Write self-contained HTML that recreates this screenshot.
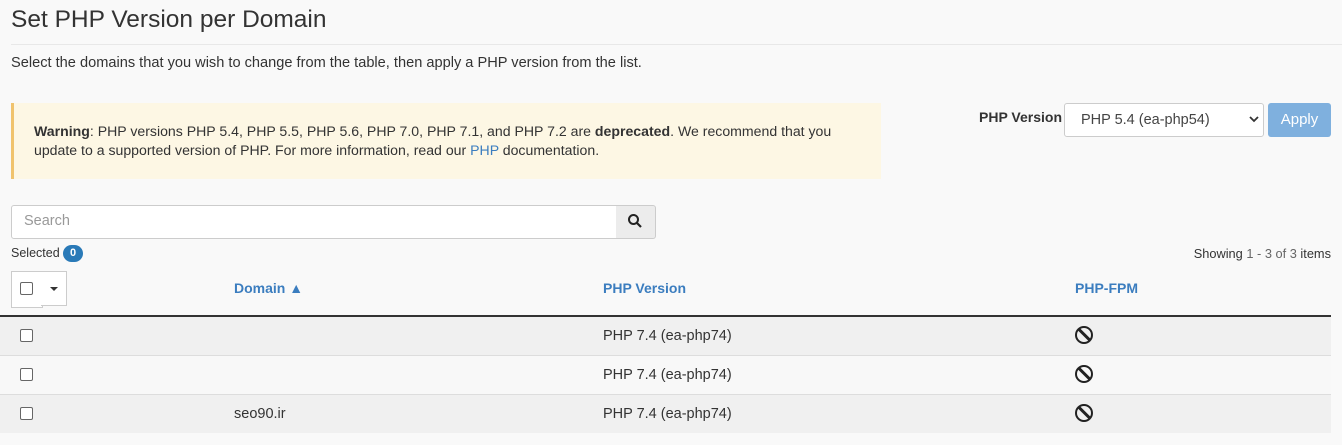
<!DOCTYPE html><html><head><style>
body{margin:0;width:1342px;height:445px;background:#f9f9f9;font-family:"Liberation Sans",sans-serif;color:#333;position:relative;overflow:hidden;font-size:14px}
.a{position:absolute;white-space:nowrap}
a{color:#3b7dbf;text-decoration:none}
.ban{position:absolute;box-sizing:border-box;width:18px;height:18px;border:2.5px solid #222;border-radius:50%}
.ban:after{content:"";position:absolute;left:5.5px;top:-1px;width:2.5px;height:16px;background:#222;transform:rotate(-45deg)}
.cb{position:absolute;width:11px;height:11px;border:1px solid #666;border-radius:2px;background:#fff}
</style></head><body>
<div class="a" style="left:11px;top:6px;font-size:24.5px;color:#333">Set PHP Version per Domain</div>
<div class="a" style="left:11px;top:44px;width:1331px;height:1px;background:#e8e8e8"></div>
<div class="a" style="left:11px;top:55px;font-size:14.6px">Select the domains that you wish to change from the table, then apply a PHP version from the list.</div>
<div class="a" style="left:11px;top:103px;width:867px;height:76px;background:#fdf7e4;border-left:3px solid #f0c36d"></div>
<div class="a" style="left:34px;top:122px;font-size:14.1px;line-height:19px"><b>Warning</b>: PHP versions PHP 5.4, PHP 5.5, PHP 5.6, PHP 7.0, PHP 7.1, and PHP 7.2 are <b>deprecated</b>. We recommend that you<br>update to a supported version of PHP. For more information, read our <a>PHP</a> documentation.</div>
<div class="a" style="left:979px;top:109px;font-size:14px;font-weight:bold;color:#333">PHP Version</div>
<div class="a" style="left:1064px;top:103px;width:198px;height:32px;border:1px solid #ccc;border-radius:3px;background:#fff"></div>
<div class="a" style="left:1081px;top:112px;font-size:14.5px;color:#444">PHP 5.4 (ea-php54)</div>
<svg class="a" style="left:1249px;top:116px" width="10" height="7"><path d="M1 1l4 4 4-4" fill="none" stroke="#333" stroke-width="1.8"/></svg>
<div class="a" style="left:1268px;top:103px;width:63px;height:34px;background:#7fb0de;border-radius:3px;color:#fff;font-size:15px;text-align:center;line-height:34px">Apply</div>
<div class="a" style="left:11px;top:205px;width:604px;height:32px;border:1px solid #ccc;border-radius:3px 0 0 3px;background:#fff"></div>
<div class="a" style="left:24px;top:213px;color:#999;font-size:14.5px">Search</div>
<div class="a" style="left:616px;top:205px;width:39px;height:32px;border:1px solid #ccc;border-left:0;background:#ececec;border-radius:0 3px 3px 0"></div>
<svg class="a" style="left:627px;top:213px" width="16" height="16"><circle cx="6.5" cy="6.5" r="4.5" fill="none" stroke="#222" stroke-width="2"/><path d="M10 10l4 4" stroke="#222" stroke-width="2.2"/></svg>
<div class="a" style="left:11px;top:246px;font-size:12.5px">Selected</div>
<div class="a" style="left:63px;top:245px;width:20px;height:17px;border-radius:9px;background:#2a7ab8;color:#fff;font-size:11px;font-weight:bold;text-align:center;line-height:17px">0</div>
<div class="a" style="right:11px;top:246px;font-size:12.8px">Showing <span style="color:#666">1 - 3 of 3</span> items</div>
<div class="a" style="left:11px;top:271px;width:30px;height:35px;border:1px solid #ccc;background:#fff"></div>
<div class="cb" style="left:20px;top:282px"></div>
<div class="a" style="left:41px;top:271px;width:25px;height:33px;border:1px solid #ccc;border-left:0;background:#fff"></div>
<div class="a" style="left:50px;top:287px;border-left:4px solid transparent;border-right:4px solid transparent;border-top:4px solid #333"></div>
<div class="a" style="left:234px;top:280px;font-weight:bold;color:#3b7dbf">Domain ▲</div>
<div class="a" style="left:603px;top:280px;font-weight:bold;color:#3b7dbf">PHP Version</div>
<div class="a" style="left:1075px;top:280px;font-weight:bold;color:#3b7dbf">PHP-FPM</div>
<div class="a" style="left:0;top:315px;width:1331px;height:2px;background:#333"></div>
<div class="a" style="left:0;top:317px;width:1331px;height:38px;background:#f0f0f0;border-bottom:1px solid #ddd"></div>
<div class="a" style="left:0;top:356px;width:1331px;height:38px;background:#f8f8f8;border-bottom:1px solid #ddd"></div>
<div class="a" style="left:0;top:395px;width:1331px;height:38px;background:#f0f0f0"></div>
<div class="cb" style="left:20px;top:329px"></div><div class="cb" style="left:20px;top:368px"></div><div class="cb" style="left:20px;top:407px"></div>
<div class="a" style="left:603px;top:328px;font-size:14.5px">PHP 7.4 (ea-php74)</div>
<div class="a" style="left:603px;top:367px;font-size:14.5px">PHP 7.4 (ea-php74)</div>
<div class="a" style="left:234px;top:406px;font-size:14.5px">seo90.ir</div>
<div class="a" style="left:603px;top:406px;font-size:14.5px">PHP 7.4 (ea-php74)</div>
<div class="ban" style="left:1075px;top:326px"></div>
<div class="ban" style="left:1075px;top:365px"></div>
<div class="ban" style="left:1075px;top:404px"></div>
</body></html>
